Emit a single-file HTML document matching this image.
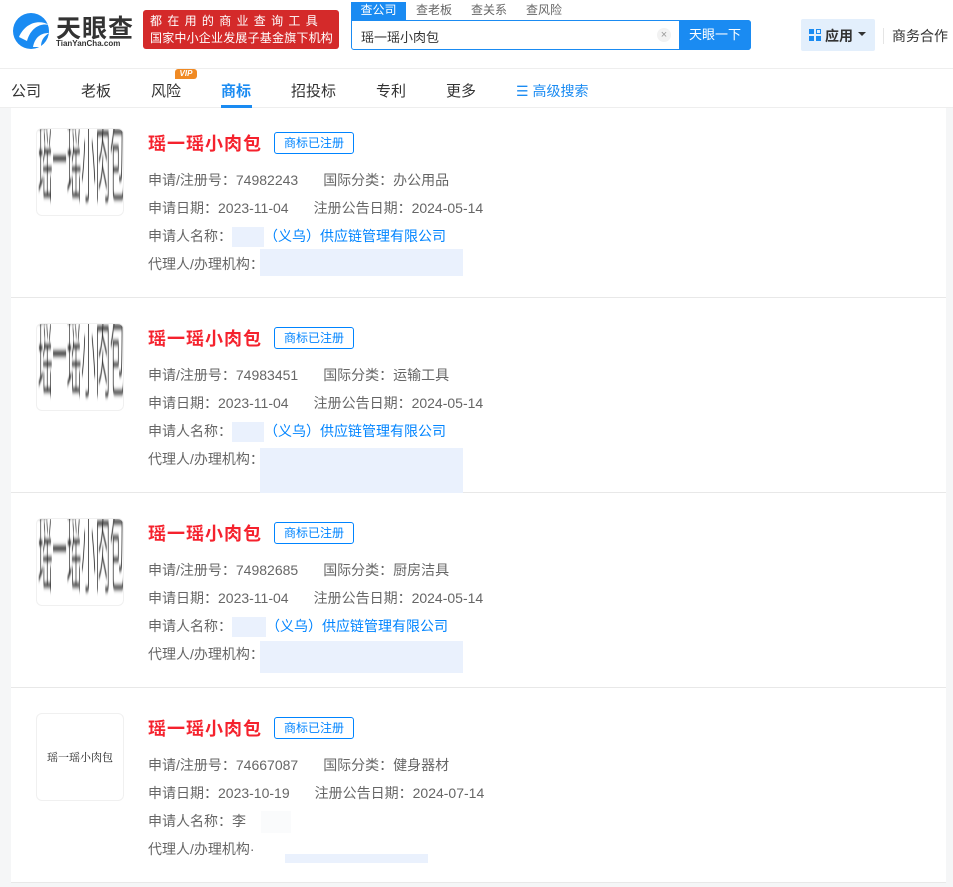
<!DOCTYPE html><html><head><meta charset="utf-8"><style>
*{margin:0;padding:0;box-sizing:border-box}
body{width:953px;height:887px;overflow:hidden;background:#f5f6f7;font-family:"Liberation Sans","Noto Sans CJK SC",sans-serif;position:relative;color:#333}
.a{position:absolute}
.hdr{left:0;top:0;width:953px;height:108px;background:#fff;border-bottom:1px solid #eee;z-index:2}
.card{left:11px;width:935px;height:195px;background:#fff;border-bottom:1px solid #e8e8e8}
.img{left:25px;top:25px;width:88px;height:88px;border:1px solid #f0f0f0;border-radius:6px;overflow:hidden;background:#fff}
.stretch{position:absolute;left:1px;top:-4px;font-size:16px;line-height:16px;white-space:nowrap;color:#222;transform:scale(0.9,5.8);transform-origin:0 0;font-weight:300;filter:blur(.4px)}
.title{left:137px;top:27px;font-size:18px;font-weight:bold;color:#f5222d;letter-spacing:1px}
.badge{left:263px;top:29px;width:80px;height:22px;border:1px solid #0084ff;border-radius:3px;color:#0084ff;font-size:12px;text-align:center;line-height:20px}
.row{left:137px;font-size:14px;color:#666;white-space:nowrap}
.blue{color:#0084ff}
.blur{background:#eaf1fd}
.tabs span{position:absolute;top:7px;font-size:15px;color:#333}
</style></head><body>
<div class="a hdr">
 <svg class="a" style="left:11px;top:11px" width="42" height="40" viewBox="0 0 42 40"><circle cx="20" cy="20" r="18" fill="#1a8bf2"/><path d="M8 26 C14 12 28 8 38 14 C30 12 20 16 16 30Z" fill="#fff"/><path d="M22 36 C24 26 30 22 38 22 C32 26 30 30 30 36Z" fill="#fff"/></svg>
 <div class="a" style="left:56px;top:9px;font-size:25px;font-weight:bold;color:#333;letter-spacing:1px">天眼查</div>
 <div class="a" style="left:56px;top:39px;font-size:8px;color:#333;font-weight:bold">TianYanCha.com</div>
 <div class="a" style="left:143px;top:10px;width:196px;height:39px;background:#d42a2a;border-radius:3px;color:#fff;font-size:12px;line-height:17px;padding:3px 0 0 7px"><div style="letter-spacing:5.3px">都在用的商业查询工具</div><div style="letter-spacing:.2px">国家中小企业发展子基金旗下机构</div></div>
 <div class="a" style="left:351px;top:2px;width:55px;height:18px;background:#1a8bf2;color:#fff;font-size:12px;text-align:center;line-height:17px">查公司</div>
 <div class="a" style="left:416px;top:2px;font-size:12px;color:#666;line-height:17px">查老板</div>
 <div class="a" style="left:471px;top:2px;font-size:12px;color:#666;line-height:17px">查关系</div>
 <div class="a" style="left:526px;top:2px;font-size:12px;color:#666;line-height:17px">查风险</div>
 <div class="a" style="left:351px;top:20px;width:400px;height:30px;border:1px solid #1a8bf2;border-radius:0 3px 3px 3px;background:#fff"></div>
 <div class="a" style="left:361px;top:27px;font-size:13px">瑶一瑶小肉包</div>
 <div class="a" style="left:657px;top:28px;width:14px;height:14px;border-radius:7px;background:#f2f2f2;color:#999;font-size:11px;text-align:center;line-height:14px">×</div>
 <div class="a" style="left:679px;top:20px;width:72px;height:30px;background:#1a8bf2;border-radius:0 3px 3px 0;color:#fff;font-size:13px;text-align:center;line-height:30px">天眼一下</div>
 <div class="a" style="left:801px;top:19px;width:74px;height:32px;background:#e3effc;border-radius:2px"></div>
 <svg class="a" style="left:809px;top:29px" width="12" height="12"><rect x="0" y="0" width="5" height="5" fill="#1a8bf2"/><rect x="7.5" y="0.5" width="4" height="4" fill="none" stroke="#1a8bf2"/><rect x="0" y="7" width="5" height="5" fill="#1a8bf2"/><rect x="7" y="7" width="5" height="5" fill="#1a8bf2"/></svg>
 <div class="a" style="left:825px;top:26px;font-size:14px;font-weight:bold;color:#333">应用</div>
 <div class="a" style="left:858px;top:32px;border:4px solid transparent;border-top:4px solid #333"></div>
 <div class="a" style="left:883px;top:28px;width:1px;height:16px;background:#e5e5e5"></div>
 <div class="a" style="left:892px;top:26px;font-size:14px;color:#333">商务合作</div>
 <div class="a" style="left:0;top:68px;width:953px;height:1px;background:#eee"></div>
 <div class="tabs a" style="left:0;top:73px;width:953px;height:35px">
  <span style="left:11px">公司</span><span style="left:81px">老板</span><span style="left:151px">风险</span><span style="left:221px;color:#1a8bf2;font-weight:bold">商标</span><span style="left:291px">招投标</span><span style="left:376px">专利</span><span style="left:446px">更多</span>
  <span style="left:516px;color:#1a8bf2;font-size:14px;top:8px">☰ 高级搜索</span>
 </div>
 <div class="a" style="left:175px;top:69px;width:22px;height:10px;background:#f08a24;border-radius:3px 3px 3px 0;color:#fff;font-size:8px;font-weight:bold;font-style:italic;text-align:center;line-height:10px">VIP</div>
 <div class="a" style="left:221px;top:105px;width:31px;height:3px;background:#1a8bf2"></div>
</div>

<div class="a card" style="top:103px">
 <div class="a img"><div class="stretch">瑶一瑶小肉包</div></div>
 <div class="a title">瑶一瑶小肉包</div><div class="a badge">商标已注册</div>
 <div class="a row" style="top:67px">申请/注册号：74982243<span style="margin-left:25px">国际分类：办公用品</span></div>
 <div class="a row" style="top:95px">申请日期：2023-11-04<span style="margin-left:25px">注册公告日期：2024-05-14</span></div>
 <div class="a row" style="top:123px">申请人名称：<span class="blur" style="display:inline-block;width:32px;height:20px;vertical-align:middle"></span><span class="blue">（义乌）供应链管理有限公司</span></div>
 <div class="a row" style="top:151px">代理人/办理机构：</div>
 <div class="a blur" style="left:249px;top:146px;width:203px;height:27px"></div>
</div>
<div class="a card" style="top:298px">
 <div class="a img"><div class="stretch">瑶一瑶小肉包</div></div>
 <div class="a title">瑶一瑶小肉包</div><div class="a badge">商标已注册</div>
 <div class="a row" style="top:67px">申请/注册号：74983451<span style="margin-left:25px">国际分类：运输工具</span></div>
 <div class="a row" style="top:95px">申请日期：2023-11-04<span style="margin-left:25px">注册公告日期：2024-05-14</span></div>
 <div class="a row" style="top:123px">申请人名称：<span class="blur" style="display:inline-block;width:32px;height:20px;vertical-align:middle"></span><span class="blue">（义乌）供应链管理有限公司</span></div>
 <div class="a row" style="top:151px">代理人/办理机构：</div>
 <div class="a blur" style="left:249px;top:150px;width:203px;height:48px"></div>
</div>
<div class="a card" style="top:493px">
 <div class="a img"><div class="stretch">瑶一瑶小肉包</div></div>
 <div class="a title">瑶一瑶小肉包</div><div class="a badge">商标已注册</div>
 <div class="a row" style="top:67px">申请/注册号：74982685<span style="margin-left:25px">国际分类：厨房洁具</span></div>
 <div class="a row" style="top:95px">申请日期：2023-11-04<span style="margin-left:25px">注册公告日期：2024-05-14</span></div>
 <div class="a row" style="top:123px">申请人名称：<span class="blur" style="display:inline-block;width:34px;height:20px;vertical-align:middle"></span><span class="blue">（义乌）供应链管理有限公司</span></div>
 <div class="a row" style="top:151px">代理人/办理机构：</div>
 <div class="a blur" style="left:249px;top:148px;width:203px;height:32px"></div>
</div>
<div class="a card" style="top:688px">
 <div class="a img" style="text-align:center;line-height:86px;font-size:11px;font-family:'Noto Serif CJK SC',serif;color:#222">瑶一瑶小肉包</div>
 <div class="a title">瑶一瑶小肉包</div><div class="a badge">商标已注册</div>
 <div class="a row" style="top:67px">申请/注册号：74667087<span style="margin-left:25px">国际分类：健身器材</span></div>
 <div class="a row" style="top:95px">申请日期：2023-10-19<span style="margin-left:25px">注册公告日期：2024-07-14</span></div>
 <div class="a row" style="top:123px">申请人名称：李</div>
 <div class="a" style="left:250px;top:123px;width:30px;height:22px;background:#fafbfc"></div>
 <div class="a row" style="top:151px">代理人/办理机构·</div>
 <div class="a blur" style="left:274px;top:166px;width:143px;height:9px"></div>
</div>
</body></html>
